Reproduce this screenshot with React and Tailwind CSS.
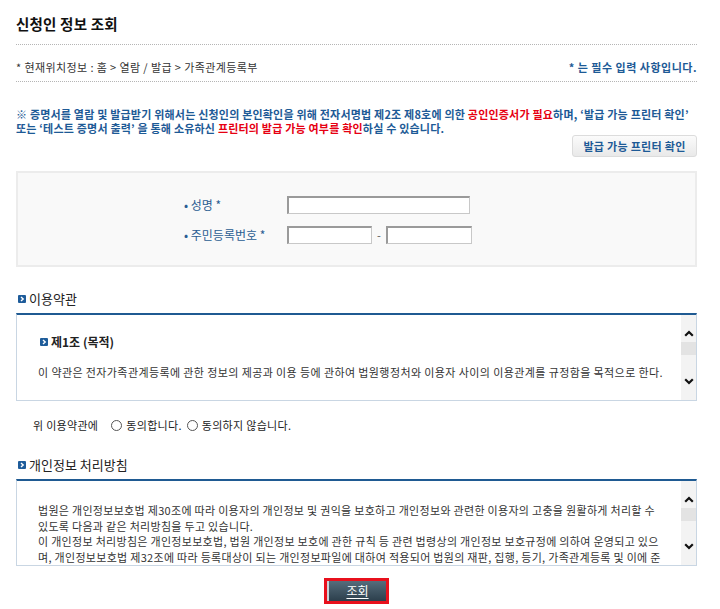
import React from "react";

const F = { fontFamily: '"Noto Sans CJK KR", "Noto Sans", sans-serif' };

function SecIcon({ size = 8 }) {
  return (
    <svg width={size} height={size} viewBox="0 0 8 8" className="shrink-0">
      <rect x="0" y="0" width="8" height="8" rx="1" fill="#1e5c9a" />
      <path d="M3 2 L5.2 4 L3 6" stroke="#fff" strokeWidth="1.4" fill="none" />
    </svg>
  );
}

function ScrollCol() {
  return (
    <div className="w-[15px] shrink-0 bg-[#f3f3f3] flex flex-col items-center">
      <svg width="10" height="7" viewBox="0 0 10 7" className="mt-[15px]">
        <path d="M1.2 5.8 L5 2 L8.8 5.8" stroke="#111" strokeWidth="2.2" fill="none" />
      </svg>
      <div className="w-full h-[13px] bg-[#e3e3e3] mt-[5px]" />
      <div className="flex-1" />
      <svg width="10" height="7" viewBox="0 0 10 7" className="mb-[15px]">
        <path d="M1.2 1.2 L5 5 L8.8 1.2" stroke="#111" strokeWidth="2.2" fill="none" />
      </svg>
    </div>
  );
}

function Radio() {
  return <span className="inline-block w-[11px] h-[11px] rounded-full border border-[#555] bg-white" />;
}

export default function App() {
  return (
    <div style={F} className="w-[720px] h-[609px] overflow-hidden bg-white pl-[16px] pr-[23px] text-[#333]">
      <div className="pt-[14px] pb-[10px] text-[14.5px] leading-[20px] font-bold text-[#111] tracking-[0.2px]">신청인 정보 조회</div>
      <div className="border-t border-dotted border-[#b5b5b5]" />
      <div className="h-[36px] pt-[15px] flex justify-between text-[11px] leading-[14px]">
        <span className="text-[#333] tracking-[0.4px]">* 현재위치정보 : 홈 &gt; 열람 / 발급 &gt; 가족관계등록부</span>
        <span className="font-bold text-[#1d5a96] tracking-[0.5px]">* 는 필수 입력 사항입니다.</span>
      </div>
      <div className="border-t border-dotted border-[#b5b5b5]" />

      <div className="mt-[25px] text-[11px] leading-[14px] font-bold text-[#1d5a96] tracking-[0.2px] whitespace-nowrap">
        <div>
          ※ 증명서를 열람 및 발급받기 위해서는 신청인의 본인확인을 위해 전자서명법 제2조 제8호에 의한{" "}
          <span className="text-[#e60012]">공인인증서가 필요</span>하며, ‘발급 가능 프린터 확인’
        </div>
        <div>
          또는 ‘테스트 증명서 출력’ 을 통해 소유하신{" "}
          <span className="text-[#e60012]">프린터의 발급 가능 여부를 확인</span>하실 수 있습니다.
        </div>
      </div>
      <div className="flex justify-end mt-[0px]">
        <button className="h-[22px] w-[125px] rounded-[3px] border border-[#dcdcdc] bg-gradient-to-b from-[#fbfbfb] to-[#e9e9e9] text-[11px] font-bold text-[#1d5a96] tracking-[0.3px]">
          발급 가능 프린터 확인
        </button>
      </div>

      <div className="mt-[14px] h-[96px] border-2 border-[#ececec] bg-[#f9f9f9] pl-[166px] pt-[23px]">
        <div className="grid grid-cols-[103px_auto] gap-y-[12px] items-center text-[12px] text-[#2a5d92]">
          <div className="leading-[18px]">• 성명 *</div>
          <input className="w-[183px] h-[18px] bg-white border border-[#c8c8c8] border-t-[#9a9a9a] border-l-[#9a9a9a] border-t-2 border-l-2" />
          <div className="leading-[18px]">• 주민등록번호 *</div>
          <div className="flex items-center">
            <input className="w-[85px] h-[18px] bg-white border border-[#c8c8c8] border-t-[#9a9a9a] border-l-[#9a9a9a] border-t-2 border-l-2" />
            <span className="w-[14px] text-center text-[11px] text-[#555]">-</span>
            <input className="w-[86px] h-[18px] bg-white border border-[#c8c8c8] border-t-[#9a9a9a] border-l-[#9a9a9a] border-t-2 border-l-2" />
          </div>
        </div>
      </div>

      <div className="mt-[23px] flex items-center gap-[3px] pl-[2px] text-[13px] leading-[18px] text-[#222]">
        <SecIcon />
        <span>이용약관</span>
      </div>
      <div className="mt-[5px] h-[88px] flex border border-[#c9d6e3] border-t-2 border-t-[#1f5a92]">
        <div className="flex-1 pl-[21px] pt-[19px] text-[11px]">
          <div className="flex items-center gap-[3px] pl-[2px] leading-[16px]">
            <SecIcon />
            <span className="font-bold text-[12px] text-[#222]">제1조 (목적)</span>
          </div>
          <div className="mt-[14px] leading-[16px] whitespace-nowrap text-[#333] tracking-[0.4px]">
            이 약관은 전자가족관계등록에 관한 정보의 제공과 이용 등에 관하여 법원행정처와 이용자 사이의 이용관계를 규정함을 목적으로 한다.
          </div>
        </div>
        <ScrollCol />
      </div>

      <div className="mt-[16px] pl-[17px] flex items-center text-[11px] leading-[16px] text-[#222] tracking-[0.3px]">
        <span>위 이용약관에</span>
        <span className="ml-[13px] mr-[4px] flex"><Radio /></span>
        <span>동의합니다.</span>
        <span className="ml-[5px] mr-[4px] flex"><Radio /></span>
        <span>동의하지 않습니다.</span>
      </div>

      <div className="mt-[23px] flex items-center gap-[3px] pl-[2px] text-[13px] leading-[18px] text-[#222]">
        <SecIcon />
        <span>개인정보 처리방침</span>
      </div>
      <div className="mt-[5px] h-[87px] flex border border-[#c9d6e3] border-t-2 border-t-[#1f5a92]">
        <div className="flex-1 overflow-hidden pl-[21px] pr-[6px] pt-[22px] text-[11px] leading-[15.5px] text-[#333] whitespace-nowrap tracking-[0.3px]">
          <div>법원은 개인정보보호법 제30조에 따라 이용자의 개인정보 및 권익을 보호하고 개인정보와 관련한 이용자의 고충을 원활하게 처리할 수</div>
          <div>있도록 다음과 같은 처리방침을 두고 있습니다.</div>
          <div>이 개인정보 처리방침은 개인정보보호법, 법원 개인정보 보호에 관한 규칙 등 관련 법령상의 개인정보 보호규정에 의하여 운영되고 있으</div>
          <div>며, 개인정보보호법 제32조에 따라 등록대상이 되는 개인정보파일에 대하여 적용되어 법원의 재판, 집행, 등기, 가족관계등록 및 이에 준</div>
          <div>하는 업무, 사법행정 업무 등을 처리하기 위하여 개인정보를 수집합니다.</div>
        </div>
        <ScrollCol />
      </div>

      <div className="mt-[12px] flex justify-center">
        <div className="border-[3px] border-[#e8101c] p-0 flex">
          <button className="w-[59px] h-[20px] bg-gradient-to-b from-[#566d7c] to-[#2c3f4c] border-l-2 border-l-[#c9d2d8] text-white text-[12px] leading-[20px] underline underline-offset-2">
            조회
          </button>
        </div>
      </div>
    </div>
  );
}
